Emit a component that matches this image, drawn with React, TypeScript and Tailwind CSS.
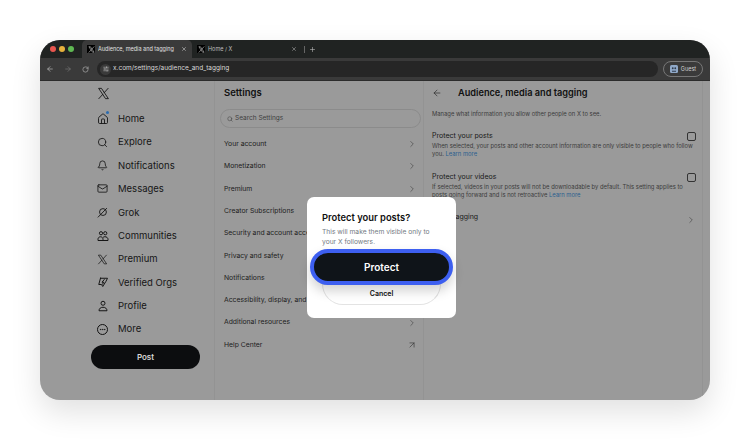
import React from 'react';
import {
  ArrowLeft, ArrowRight, ArrowUpRight, Bell, ChevronRight, Ellipsis, Home, Mail, Plus,
  RotateCw, Search, SlidersHorizontal, X,
} from 'lucide-react';

function XLogo({ className }: { className?: string }) {
  return (
    <svg viewBox="0 0 24 24" className={className} fill="none" stroke="currentColor" strokeWidth="1.6">
      <path d="M3 2.5h5.2L21 21.5h-5.2L3 2.5z" strokeLinejoin="round" />
      <path d="M20.5 2.5l-7.4 8.2M10.6 13.6L3.4 21.5" strokeLinecap="round" />
    </svg>
  );
}

function GrokIcon({ className }: { className?: string }) {
  return (
    <svg viewBox="0 0 24 24" className={className} fill="none" stroke="currentColor" strokeWidth="2">
      <circle cx="13" cy="11" r="7.5" />
      <path d="M2.5 22L21 3" strokeLinecap="round" />
    </svg>
  );
}

function CommunitiesIcon({ className }: { className?: string }) {
  return (
    <svg viewBox="0 0 24 24" className={className} fill="none" stroke="currentColor" strokeWidth="2" strokeLinejoin="round">
      <circle cx="8" cy="6.5" r="3.2" />
      <circle cx="16.5" cy="6.5" r="3.2" />
      <path d="M2 21v-2.5c0-3 2.4-5 5-5s5 2 5 5V21H2z" />
      <path d="M12 15c.9-1 2.2-1.6 3.7-1.6 3.4 0 6.3 2.2 6.3 5V21H12" />
    </svg>
  );
}

function OrgsIcon({ className }: { className?: string }) {
  return (
    <svg viewBox="0 0 24 24" className={className} fill="none" stroke="currentColor" strokeWidth="2" strokeLinejoin="round" strokeLinecap="round">
      <path d="M7 4.5h14l-3 6-6.500 10.500L9 17H3.500L7 4.500z" />
      <path d="M14.500 7L10 12.500h3.500L11 16.500" />
    </svg>
  );
}

function ProfileIcon({ className }: { className?: string }) {
  return (
    <svg viewBox="0 0 24 24" className={className} fill="none" stroke="currentColor" strokeWidth="2" strokeLinejoin="round">
      <circle cx="12" cy="6.500" r="4" />
      <path d="M4 21.500c0-4.500 3.500-7 8-7s8 2.500 8 7H4z" />
    </svg>
  );
}

function GuestAvatar() {
  return (
    <svg viewBox="0 0 16 16" className="h-[8px] w-[8px]">
      <rect width="16" height="16" rx="3" fill="#8fa8c8" />
      <circle cx="5.500" cy="6.500" r="1.800" fill="#2f3b4c" />
      <circle cx="10.500" cy="6.500" r="1.800" fill="#2f3b4c" />
      <path d="M4 11.500h8v2H4z" fill="#2f3b4c" />
    </svg>
  );
}

function Tab({ title, active }: { title: string; active?: boolean }) {
  return (
    <div className={`flex h-[18px] w-[110px] items-center gap-[3px] rounded-t-[5px] pl-[5px] pr-[5px] ${active ? 'bg-[#3a3a3a] text-[#e0e0e0]' : 'text-[#bdbdbd]'}`}>
      <span className="flex h-[8px] w-[8px] shrink-0 items-center justify-center bg-black text-white">
        <XLogo className="h-[7px] w-[7px]" />
      </span>
      <span className="flex-1 overflow-hidden whitespace-nowrap text-[5.5px]">{title}</span>
      <X className="h-[6px] w-[6px] shrink-0" strokeWidth={2} />
    </div>
  );
}

const navItems = [
  { label: 'Home', icon: <Home className="h-[12px] w-[12px]" strokeWidth={1.8} /> },
  { label: 'Explore', icon: <Search className="h-[11px] w-[11px]" strokeWidth={1.8} /> },
  { label: 'Notifications', icon: <Bell className="h-[11px] w-[11px]" strokeWidth={1.8} /> },
  { label: 'Messages', icon: <Mail className="h-[11px] w-[11px]" strokeWidth={1.8} /> },
  { label: 'Grok', icon: <GrokIcon className="h-[11px] w-[11px]" /> },
  { label: 'Communities', icon: <CommunitiesIcon className="h-[12px] w-[12px]" /> },
  { label: 'Premium', icon: <XLogo className="h-[11px] w-[11px]" /> },
  { label: 'Verified Orgs', icon: <OrgsIcon className="h-[12px] w-[12px]" /> },
  { label: 'Profile', icon: <ProfileIcon className="h-[12px] w-[12px]" /> },
  { label: 'More', icon: <span className="flex h-[11px] w-[11px] items-center justify-center rounded-full border border-[#111]"><Ellipsis className="h-[7px] w-[7px]" strokeWidth={2.5} /></span> },
];

const settingsRows = [
  'Your account', 'Monetization', 'Premium', 'Creator Subscriptions', 'Security and account access',
  'Privacy and safety', 'Notifications', 'Accessibility, display, and languages', 'Additional resources',
];

export default function App() {
  return (
    <div className="h-[440px] w-[750px] overflow-hidden bg-white px-[40px] pt-[40px] font-['Inter',sans-serif]">
      <div className="relative flex h-[360px] w-[670px] flex-col overflow-hidden rounded-[20px] bg-[#9a9a9a] shadow-[0_12px_30px_rgba(0,0,0,0.12)]">
        {/* tab strip */}
        <div className="flex h-[18px] shrink-0 items-end bg-[#202322] pl-[10px]">
          <div className="flex h-full items-center gap-[3px]">
            <span className="h-[6px] w-[6px] rounded-full bg-[#e8564f]" />
            <span className="h-[6px] w-[6px] rounded-full bg-[#e6b13c]" />
            <span className="h-[6px] w-[6px] rounded-full bg-[#5fb953]" />
          </div>
          <div className="ml-[8px] flex items-end">
            <Tab title="Audience, media and tagging" active />
            <Tab title="Home / X" />
          </div>
          <div className="ml-[2px] flex h-full items-center gap-[4px] text-[#bdbdbd]">
            <span className="h-[7px] w-px bg-[#666]" />
            <Plus className="h-[7px] w-[7px]" strokeWidth={2} />
          </div>
        </div>

        {/* address bar */}
        <div className="flex h-[23px] shrink-0 items-center border-b border-[#2c2c2c] bg-[#3a3a3a] pl-[6px] pr-[7px]">
          <div className="flex w-[51px] items-center gap-[10px] text-[#bdbdbd]">
            <ArrowLeft className="h-[8px] w-[8px]" />
            <ArrowRight className="h-[8px] w-[8px] text-[#777]" />
            <RotateCw className="h-[7px] w-[7px]" />
          </div>
          <div className="flex h-[16px] w-[561px] items-center rounded-full bg-[#262626] pl-[3px]">
            <span className="flex h-[11px] w-[11px] items-center justify-center rounded-full bg-[#3a3a3a] text-[#d0d0d0]">
              <SlidersHorizontal className="h-[6px] w-[6px]" />
            </span>
            <span className="ml-[2px] text-[6.5px] text-[#d8d8d8]">x.com/settings/audience_and_tagging</span>
          </div>
          <div className="ml-[5px] flex h-[16px] flex-1 items-center justify-center gap-[3px] rounded-full border border-[#777]">
            <GuestAvatar />
            <span className="text-[5.5px] text-[#cfcfcf]">Guest</span>
          </div>
        </div>

        {/* page */}
        <div className="flex min-h-0 flex-1">
          <aside className="w-[175px] shrink-0 border-r border-[#939393] pl-[51px]">
            <div className="flex h-[24px] items-center pl-[6px] text-[#111]">
              <XLogo className="h-[13px] w-[13px]" />
            </div>
            <nav className="mt-[2px] flex flex-col">
              {navItems.map((item) => (
                <div key={item.label} className="flex h-[23.4px] items-center text-[#161616]">
                  <span className="relative flex w-[21px] justify-center pl-[2px]">
                    {item.icon}
                    {item.label === 'Home' && (
                      <span className="absolute right-[3px] top-[-2px] h-[3px] w-[3px] rounded-full bg-[#2c6cb0]" />
                    )}
                  </span>
                  <span className="ml-[6px] text-[9.5px] leading-none">{item.label}</span>
                </div>
              ))}
            </nav>
            <button className="mt-[4px] h-[24px] w-[109px] rounded-full bg-[#0c0d0f] text-[8px] font-semibold text-[#d8d8d8]">
              Post
            </button>
          </aside>

          <section className="w-[209px] shrink-0 border-r border-[#939393] pl-[5px] pr-[2px]">
            <h2 className="flex h-[24px] items-center pl-[4px] text-[9.5px] font-semibold text-[#111]">Settings</h2>
            <div className="mt-[4px] flex h-[19px] items-center gap-[2px] rounded-full border border-[#8b8b8b] pl-[6px] text-[#3f3f3f]">
              <Search className="h-[6px] w-[6px]" />
              <span className="text-[6.5px]">Search Settings</span>
            </div>
            <div className="mt-[5px] flex flex-col">
              {settingsRows.map((row) => (
                <div key={row} className="flex h-[22.3px] items-center justify-between pl-[4px] pr-[4px] text-[#1c1c1c]">
                  <span className="whitespace-nowrap text-[6.8px]">{row}</span>
                  <ChevronRight className="h-[10px] w-[10px] text-[#444]" strokeWidth={1.5} />
                </div>
              ))}
              <div className="flex h-[22.3px] items-center justify-between pl-[4px] pr-[4px] text-[#1c1c1c]">
                <span className="text-[6.8px]">Help Center</span>
                <ArrowUpRight className="h-[10px] w-[10px] text-[#333]" strokeWidth={1.5} />
              </div>
            </div>
          </section>

          <section className="w-[279px] shrink-0 border-r border-[#939393] pl-[8px] pr-[6px]">
            <div className="flex h-[23px] items-center">
              <ArrowLeft className="h-[10px] w-[10px] text-[#222]" strokeWidth={1.5} />
              <h2 className="ml-[16px] text-[9.2px] font-semibold text-[#111]">Audience, media and tagging</h2>
            </div>
            <p className="mt-[6px] text-[5.85px] leading-[8px] text-[#3c3c3c]">Manage what information you allow other people on X to see.</p>
            <div className="mt-[13px] flex items-center justify-between">
              <h3 className="text-[7px] leading-[10px] text-[#181818]">Protect your posts</h3>
              <span className="h-[9px] w-[9px] rounded-[2px] border border-[#333]" />
            </div>
            <p className="mt-[1px] text-[5.85px] leading-[7.5px] text-[#3c3c3c]">
              When selected, your posts and other account information are only visible to people who follow you. <span className="text-[#2a5f8f]">Learn more</span>
            </p>
            <div className="mt-[15px] flex items-center justify-between">
              <h3 className="text-[7px] leading-[10px] text-[#181818]">Protect your videos</h3>
              <span className="h-[9px] w-[9px] rounded-[2px] border border-[#333]" />
            </div>
            <p className="mt-[1px] text-[5.85px] leading-[7.5px] text-[#3c3c3c]">
              If selected, videos in your posts will not be downloadable by default. This setting applies to posts going forward and is not retroactive <span className="text-[#2a5f8f]">Learn more</span>
            </p>
            <div className="mt-[14px] flex items-start justify-between text-[#181818]">
              <h3 className="text-[7px] leading-[10px]">Photo tagging</h3>
              <ChevronRight className="mt-[3px] h-[10px] w-[10px] text-[#444]" strokeWidth={1.5} />
            </div>
          </section>
        </div>

        {/* dialog */}
        <div className="absolute left-[267px] top-[157px] h-[121px] w-[149px] rounded-[7px] bg-white">
          <div className="px-[15px] pt-[15px]">
            <h3 className="text-[9.4px] font-semibold leading-[12px] text-[#111]">Protect your posts?</h3>
            <p className="mt-[4px] text-[6.7px] leading-[9.5px] text-[#737a82]">This will make them visible only to your X followers.</p>
          </div>
          <button className="relative z-10 mx-[3px] mt-[2px] block h-[36px] w-[143px] rounded-full border-[4px] border-[#3d5ff0] bg-[#0f1419] text-[10px] font-semibold text-white shadow-[0_6px_12px_rgba(0,0,0,0.18)]">
            Protect
          </button>
          <button className="mx-[15px] -mt-[1px] block h-[21px] w-[119px] rounded-b-full border border-[#e3e3e3] text-[7px] font-semibold text-[#111]">
            Cancel
          </button>
        </div>
      </div>
    </div>
  );
}
